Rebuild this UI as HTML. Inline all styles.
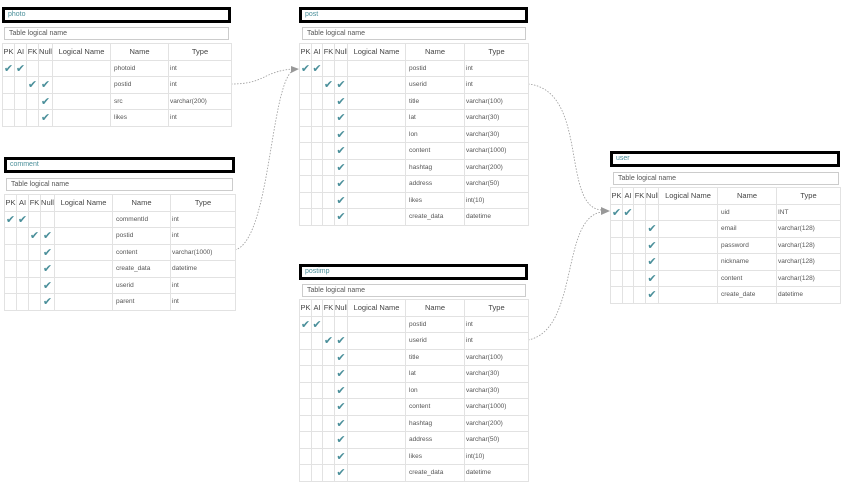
<!DOCTYPE html><html><head><meta charset="utf-8"><style>
body{margin:0;width:857px;height:492px;background:#fff;position:relative;overflow:hidden;font-family:"Liberation Sans",sans-serif}
.t{position:absolute}
.ti{position:absolute;left:0;right:0;height:10px;border:3px solid #000;background:#fff;font-size:7px;color:#4a8f9a;line-height:10px;padding-left:3px}
.in{position:absolute;height:11px;border:1px solid #ccc;font-size:7px;color:#555;line-height:11px;padding-left:4px;background:#fff}
table{position:absolute;left:0;border-collapse:collapse;table-layout:fixed;font-size:6.5px;color:#555}
td{border:1px solid #e2e2e2;height:15.5px;padding:0 0 0 1px;white-space:nowrap;overflow:hidden}
tr.h td{font-size:7.5px;color:#444;text-align:center;padding:0}
td.c{color:#4a8f9a;font-size:11px;text-align:center;padding:0}
td.n{padding-left:3px}
</style></head><body>
<svg width="857" height="492" style="position:absolute;left:0;top:0" fill="none" stroke="#999" stroke-dasharray="1.5,1.5" stroke-width="0.8">
<path d="M231 84 C265 84 262 72 292 69"/>
<path d="M235 250 C270 240 270 90 292 71"/>
<path d="M528 84 C590 90 560 210 603 210"/>
<path d="M528 340 C580 330 560 215 603 212"/>
<polygon points="299,69 291,66 291,73" fill="#999" stroke="none"/>
<polygon points="610,211 601,207 601,215" fill="#999" stroke="none"/>
</svg>

<div class="t" style="left:2px;top:7px;width:229px">
<div class="ti" style="top:0">photo</div>
<div class="in" style="top:20px;left:2px;width:219px">Table logical name</div>
<table style="top:36px;width:229px">
<colgroup><col width="12"><col width="12"><col width="12"><col width="14"><col width="58"><col width="58"><col width="63"></colgroup>
<tr class="h"><td>PK</td><td>AI</td><td>FK</td><td>Null</td><td>Logical Name</td><td>Name</td><td>Type</td></tr>
<tr><td class="c">✔</td><td class="c">✔</td><td></td><td></td><td></td><td class="n">photoid</td><td>int</td></tr>
<tr><td></td><td></td><td class="c">✔</td><td class="c">✔</td><td></td><td class="n">postid</td><td>int</td></tr>
<tr><td></td><td></td><td></td><td class="c">✔</td><td></td><td class="n">src</td><td>varchar(200)</td></tr>
<tr><td></td><td></td><td></td><td class="c">✔</td><td></td><td class="n">likes</td><td>int</td></tr>
</table></div>

<div class="t" style="left:299px;top:7px;width:229px">
<div class="ti" style="top:0">post</div>
<div class="in" style="top:20px;left:3px;width:218px">Table logical name</div>
<table style="top:36px;width:229px">
<colgroup><col width="12"><col width="11"><col width="12"><col width="13"><col width="58"><col width="59"><col width="64"></colgroup>
<tr class="h"><td>PK</td><td>AI</td><td>FK</td><td>Null</td><td>Logical Name</td><td>Name</td><td>Type</td></tr>
<tr><td class="c">✔</td><td class="c">✔</td><td></td><td></td><td></td><td class="n">postid</td><td>int</td></tr>
<tr><td></td><td></td><td class="c">✔</td><td class="c">✔</td><td></td><td class="n">userid</td><td>int</td></tr>
<tr><td></td><td></td><td></td><td class="c">✔</td><td></td><td class="n">title</td><td>varchar(100)</td></tr>
<tr><td></td><td></td><td></td><td class="c">✔</td><td></td><td class="n">lat</td><td>varchar(30)</td></tr>
<tr><td></td><td></td><td></td><td class="c">✔</td><td></td><td class="n">lon</td><td>varchar(30)</td></tr>
<tr><td></td><td></td><td></td><td class="c">✔</td><td></td><td class="n">content</td><td>varchar(1000)</td></tr>
<tr><td></td><td></td><td></td><td class="c">✔</td><td></td><td class="n">hashtag</td><td>varchar(200)</td></tr>
<tr><td></td><td></td><td></td><td class="c">✔</td><td></td><td class="n">address</td><td>varchar(50)</td></tr>
<tr><td></td><td></td><td></td><td class="c">✔</td><td></td><td class="n">likes</td><td>int(10)</td></tr>
<tr><td></td><td></td><td></td><td class="c">✔</td><td></td><td class="n">create_data</td><td>datetime</td></tr>
</table></div>

<div class="t" style="left:4px;top:157px;width:231px">
<div class="ti" style="top:0">comment</div>
<div class="in" style="top:21px;left:2px;width:221px">Table logical name</div>
<table style="top:37px;width:231px">
<colgroup><col width="12"><col width="12"><col width="12"><col width="14"><col width="58"><col width="58"><col width="65"></colgroup>
<tr class="h"><td>PK</td><td>AI</td><td>FK</td><td>Null</td><td>Logical Name</td><td>Name</td><td>Type</td></tr>
<tr><td class="c">✔</td><td class="c">✔</td><td></td><td></td><td></td><td class="n">commentId</td><td>int</td></tr>
<tr><td></td><td></td><td class="c">✔</td><td class="c">✔</td><td></td><td class="n">postid</td><td>int</td></tr>
<tr><td></td><td></td><td></td><td class="c">✔</td><td></td><td class="n">content</td><td>varchar(1000)</td></tr>
<tr><td></td><td></td><td></td><td class="c">✔</td><td></td><td class="n">create_data</td><td>datetime</td></tr>
<tr><td></td><td></td><td></td><td class="c">✔</td><td></td><td class="n">userid</td><td>int</td></tr>
<tr><td></td><td></td><td></td><td class="c">✔</td><td></td><td class="n">parent</td><td>int</td></tr>
</table></div>

<div class="t" style="left:299px;top:264px;width:229px">
<div class="ti" style="top:0">postimp</div>
<div class="in" style="top:20px;left:3px;width:218px">Table logical name</div>
<table style="top:35px;width:229px">
<colgroup><col width="12"><col width="11"><col width="12"><col width="13"><col width="58"><col width="59"><col width="64"></colgroup>
<tr class="h"><td>PK</td><td>AI</td><td>FK</td><td>Null</td><td>Logical Name</td><td>Name</td><td>Type</td></tr>
<tr><td class="c">✔</td><td class="c">✔</td><td></td><td></td><td></td><td class="n">postid</td><td>int</td></tr>
<tr><td></td><td></td><td class="c">✔</td><td class="c">✔</td><td></td><td class="n">userid</td><td>int</td></tr>
<tr><td></td><td></td><td></td><td class="c">✔</td><td></td><td class="n">title</td><td>varchar(100)</td></tr>
<tr><td></td><td></td><td></td><td class="c">✔</td><td></td><td class="n">lat</td><td>varchar(30)</td></tr>
<tr><td></td><td></td><td></td><td class="c">✔</td><td></td><td class="n">lon</td><td>varchar(30)</td></tr>
<tr><td></td><td></td><td></td><td class="c">✔</td><td></td><td class="n">content</td><td>varchar(1000)</td></tr>
<tr><td></td><td></td><td></td><td class="c">✔</td><td></td><td class="n">hashtag</td><td>varchar(200)</td></tr>
<tr><td></td><td></td><td></td><td class="c">✔</td><td></td><td class="n">address</td><td>varchar(50)</td></tr>
<tr><td></td><td></td><td></td><td class="c">✔</td><td></td><td class="n">likes</td><td>int(10)</td></tr>
<tr><td></td><td></td><td></td><td class="c">✔</td><td></td><td class="n">create_data</td><td>datetime</td></tr>
</table></div>

<div class="t" style="left:610px;top:151px;width:230px">
<div class="ti" style="top:0">user</div>
<div class="in" style="top:21px;left:3px;width:220px">Table logical name</div>
<table style="top:36px;width:230px">
<colgroup><col width="12"><col width="11"><col width="12"><col width="13"><col width="59"><col width="59"><col width="64"></colgroup>
<tr class="h"><td>PK</td><td>AI</td><td>FK</td><td>Null</td><td>Logical Name</td><td>Name</td><td>Type</td></tr>
<tr><td class="c">✔</td><td class="c">✔</td><td></td><td></td><td></td><td class="n">uid</td><td>INT</td></tr>
<tr><td></td><td></td><td></td><td class="c">✔</td><td></td><td class="n">email</td><td>varchar(128)</td></tr>
<tr><td></td><td></td><td></td><td class="c">✔</td><td></td><td class="n">password</td><td>varchar(128)</td></tr>
<tr><td></td><td></td><td></td><td class="c">✔</td><td></td><td class="n">nickname</td><td>varchar(128)</td></tr>
<tr><td></td><td></td><td></td><td class="c">✔</td><td></td><td class="n">content</td><td>varchar(128)</td></tr>
<tr><td></td><td></td><td></td><td class="c">✔</td><td></td><td class="n">create_date</td><td>datetime</td></tr>
</table></div>
</body></html>
